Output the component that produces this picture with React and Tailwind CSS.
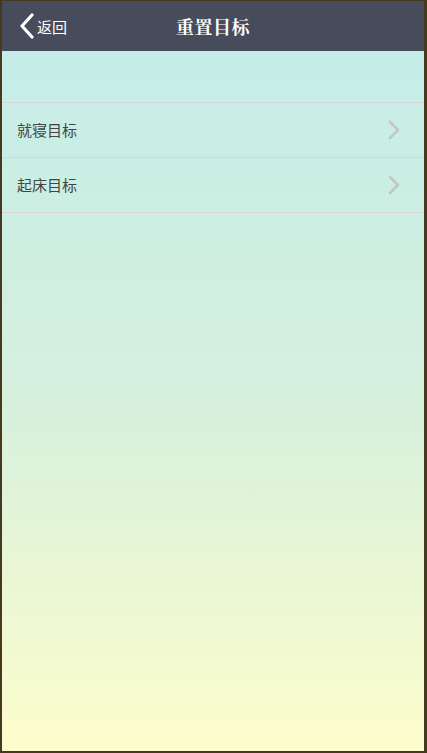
export default function App() {
  const rows = ["就寝目标", "起床目标"];
  return (
    <div className="w-[427px] h-[753px] flex flex-col border-t border-l-2 border-r-[3px] border-b-2 border-[#45391f] overflow-hidden" style={{ fontFamily: '"Noto Sans CJK SC", "Liberation Sans", sans-serif' }}>
      <div className="h-[50px] shrink-0 bg-[#474c5c] flex items-center relative">
        <div className="flex items-center pl-[16px] gap-[1px]">
          <svg width="18" height="26" viewBox="0 0 18 26" className="block">
            <path d="M14 2 L4 13 L14 24" fill="none" stroke="#ffffff" strokeWidth="3.2" strokeLinecap="round" strokeLinejoin="round" />
          </svg>
          <span className="text-white text-[15px] leading-none">返回</span>
        </div>
        <div className="absolute inset-0 flex items-center justify-center pointer-events-none">
          <span className="text-white text-[18px] font-bold leading-none tracking-[0.5px]" style={{ fontFamily: '"Noto Serif CJK SC", "Noto Sans CJK SC", serif' }}>重置目标</span>
        </div>
      </div>
      <div className="flex-1 bg-gradient-to-b from-[#c4ede8] via-[#d6f0dd] to-[#fdfdcc] pt-[51px]">
        <div className="border-t border-[#dcd4d7]">
          {rows.map((r) => (
            <div key={r} className="h-[55px] border-b border-[#dcd4d7] flex items-center justify-between pl-[15px] pr-[23px]">
              <span className="text-[15px] text-[#444444]">{r}</span>
              <svg width="14" height="20" viewBox="0 0 14 20" className="block">
                <path d="M3 2 L11 10 L3 18" fill="none" stroke="#c6c6c6" strokeWidth="2.6" strokeLinecap="round" strokeLinejoin="round" />
              </svg>
            </div>
          ))}
        </div>
      </div>
    </div>
  );
}
